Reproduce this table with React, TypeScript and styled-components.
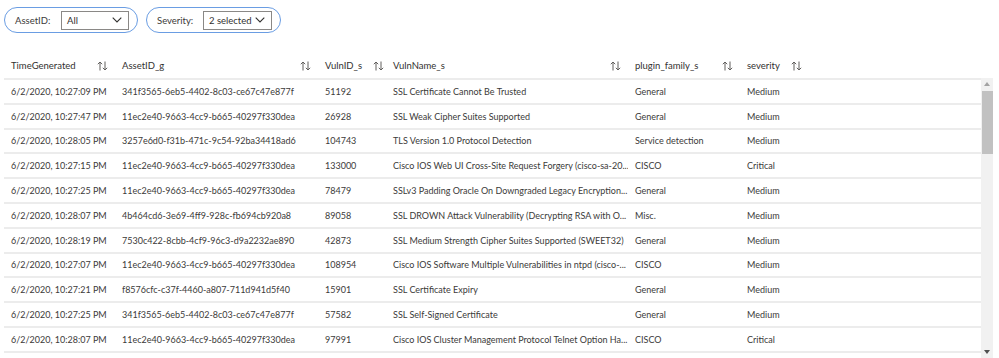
import styled, { createGlobalStyle } from "styled-components";

const GlobalStyle = createGlobalStyle`
  body {
    margin: 0;
    background: #ffffff;
    font-family: Lato, "Open Sans", sans-serif;
    color: #323130;
  }
`;

const Page = styled.div`
  width: 999px;
  height: 358px;
  overflow: hidden;
  padding: 7px 0 0 4px;
  box-sizing: border-box;
`;

const Filters = styled.div`
  display: flex;
  gap: 8px;
`;

const Pill = styled.div<{ $width: number }>`
  width: ${p => p.$width}px;
  height: 26px;
  box-sizing: border-box;
  border: 1.5px solid #6a9de3;
  border-radius: 13px;
  display: flex;
  align-items: center;
  justify-content: space-between;
  padding: 0 8px 0 10px;
`;

const PillLabel = styled.span`
  font-size: 9.5px;
  color: #3b3a39;
`;

const Select = styled.div<{ $width: number }>`
  width: ${p => p.$width}px;
  height: 19px;
  box-sizing: border-box;
  border: 1px solid #8a8886;
  display: flex;
  align-items: center;
  justify-content: space-between;
  padding: 0 6px 0 5px;
  font-size: 9.5px;
  color: #323130;
  white-space: nowrap;
  svg {
    flex-shrink: 0;
  }
`;

const Wrap = styled.div`
  margin-top: 20px;
  display: flex;
  flex-direction: column;
`;

const cols = "111px 203px 68px 242px 112px 1fr";

const HeadRow = styled.div`
  display: grid;
  grid-template-columns: ${cols};
  height: 25px;
  width: 977px;
  align-items: center;
`;

const HeadCell = styled.div<{ $tight?: boolean }>`
  display: flex;
  align-items: center;
  justify-content: ${p => (p.$tight ? "flex-start" : "space-between")};
  gap: 11px;
  padding: 0 7px;
  font-size: 9.5px;
  color: #323130;
  white-space: nowrap;
  svg {
    flex-shrink: 0;
  }
`;

const BodyArea = styled.div`
  display: flex;
  height: 280px;
`;

const Body = styled.div`
  width: 977px;
  border-top: 2px solid #ececec;
  overflow: hidden;
`;

const Row = styled.div`
  display: grid;
  grid-template-columns: ${cols};
  height: 24.8px;
  box-sizing: border-box;
  border-bottom: 2px solid #ececec;
  align-items: center;
`;

const Cell = styled.div`
  padding: 0 7px;
  font-size: 9px;
  color: #3b3a39;
  white-space: nowrap;
  overflow: hidden;
`;

const Track = styled.div`
  width: 12px;
  background: #f1f1f1;
  display: flex;
  flex-direction: column;
  align-items: center;
  justify-content: space-between;
`;

const Thumb = styled.div`
  width: 11px;
  height: 63px;
  background: #c1c1c1;
  margin-top: 1px;
`;

const ArrowBox = styled.div`
  height: 12px;
  width: 12px;
  display: flex;
  align-items: center;
  justify-content: center;
`;

const TrackTop = styled.div`
  display: flex;
  flex-direction: column;
  align-items: center;
`;

const SortIcon = () => (
  <svg width="11" height="10" viewBox="0 0 11 10" fill="none" stroke="#605e5c" strokeWidth="1">
    <path d="M3 9.5V1M0.8 3.2L3 1L5.2 3.2" />
    <path d="M8 0.5V9M5.8 6.8L8 9L10.2 6.8" />
  </svg>
);

const Chevron = () => (
  <svg width="10" height="6" viewBox="0 0 10 6" fill="none" stroke="#323130" strokeWidth="1.1">
    <path d="M0.7 0.7L5 5L9.3 0.7" />
  </svg>
);

const Tri = ({ up }: { up?: boolean }) => (
  <svg width="6" height="4" viewBox="0 0 6 4">
    <path d={up ? "M0 4L3 0L6 4Z" : "M0 0L3 4L6 0Z"} fill={up ? "#a3a3a3" : "#505050"} />
  </svg>
);

const headers = [
  { name: "TimeGenerated" },
  { name: "AssetID_g" },
  { name: "VulnID_s" },
  { name: "VulnName_s" },
  { name: "plugin_family_s" },
  { name: "severity", tight: true },
];

const rows = [
  ["6/2/2020, 10:27:09 PM", "341f3565-6eb5-4402-8c03-ce67c47e877f", "51192", "SSL Certificate Cannot Be Trusted", "General", "Medium"],
  ["6/2/2020, 10:27:47 PM", "11ec2e40-9663-4cc9-b665-40297f330dea", "26928", "SSL Weak Cipher Suites Supported", "General", "Medium"],
  ["6/2/2020, 10:28:05 PM", "3257e6d0-f31b-471c-9c54-92ba34418ad6", "104743", "TLS Version 1.0 Protocol Detection", "Service detection", "Medium"],
  ["6/2/2020, 10:27:15 PM", "11ec2e40-9663-4cc9-b665-40297f330dea", "133000", "Cisco IOS Web UI Cross-Site Request Forgery (cisco-sa-20...", "CISCO", "Critical"],
  ["6/2/2020, 10:27:25 PM", "11ec2e40-9663-4cc9-b665-40297f330dea", "78479", "SSLv3 Padding Oracle On Downgraded Legacy Encryption...", "General", "Medium"],
  ["6/2/2020, 10:28:07 PM", "4b464cd6-3e69-4ff9-928c-fb694cb920a8", "89058", "SSL DROWN Attack Vulnerability (Decrypting RSA with O...", "Misc.", "Medium"],
  ["6/2/2020, 10:28:19 PM", "7530c422-8cbb-4cf9-96c3-d9a2232ae890", "42873", "SSL Medium Strength Cipher Suites Supported (SWEET32)", "General", "Medium"],
  ["6/2/2020, 10:27:07 PM", "11ec2e40-9663-4cc9-b665-40297f330dea", "108954", "Cisco IOS Software Multiple Vulnerabilities in ntpd (cisco-...", "CISCO", "Medium"],
  ["6/2/2020, 10:27:21 PM", "f8576cfc-c37f-4460-a807-711d941d5f40", "15901", "SSL Certificate Expiry", "General", "Medium"],
  ["6/2/2020, 10:27:25 PM", "341f3565-6eb5-4402-8c03-ce67c47e877f", "57582", "SSL Self-Signed Certificate", "General", "Medium"],
  ["6/2/2020, 10:28:07 PM", "11ec2e40-9663-4cc9-b665-40297f330dea", "97991", "Cisco IOS Cluster Management Protocol Telnet Option Ha...", "CISCO", "Critical"],
];

const App = () => {
  return (
    <Page>
      <GlobalStyle />
      <Filters>
        <Pill $width={134}>
          <PillLabel>AssetID:</PillLabel>
          <Select $width={68}>
            All
            <Chevron />
          </Select>
        </Pill>
        <Pill $width={135}>
          <PillLabel>Severity:</PillLabel>
          <Select $width={69}>
            2 selected
            <Chevron />
          </Select>
        </Pill>
      </Filters>
      <Wrap>
        <HeadRow>
          {headers.map(h => (
            <HeadCell key={h.name} $tight={h.tight}>
              {h.name}
              <SortIcon />
            </HeadCell>
          ))}
        </HeadRow>
        <BodyArea>
          <Body>
            {rows.map((r, i) => (
              <Row key={i}>
                {r.map((c, j) => (
                  <Cell key={j}>{c}</Cell>
                ))}
              </Row>
            ))}
          </Body>
          <Track>
            <TrackTop>
              <ArrowBox>
                <Tri up />
              </ArrowBox>
              <Thumb />
            </TrackTop>
            <ArrowBox>
              <Tri />
            </ArrowBox>
          </Track>
        </BodyArea>
      </Wrap>
    </Page>
  );
};

export default App;
